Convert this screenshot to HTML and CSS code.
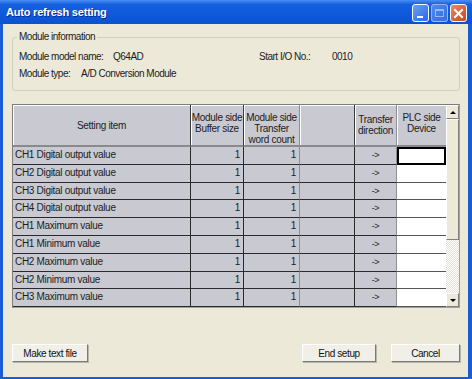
FILE: index.html
```html
<!DOCTYPE html>
<html lang="en">
  <head>
    <meta charset="UTF-8" />
    <title>Auto refresh setting</title>
    <link rel="stylesheet" href="styles.css">
  </head>
  <body>
    <div class="window">
      <div class="titlebar">
        <span class="title">Auto refresh setting</span>
        <div class="caption-btns">
          <span class="cap-btn min"><span class="min-bar"></span></span>
          <span class="cap-btn max"><span class="max-box"></span></span>
          <span class="cap-btn close">
            <svg width="11" height="11" viewBox="0 0 11 11">
              <path d="M2 2 L9 9 M9 2 L2 9" stroke="#fff" stroke-width="2" stroke-linecap="square" />
            </svg>
          </span>
        </div>
      </div>

      <div class="client">
        <fieldset class="group">
          <legend>Module information</legend>
          <div class="info-row">
            <span class="model-label">Module model name:</span>
            <span class="model-value">Q64AD</span>
            <span class="io-label">Start I/O No.:</span>
            <span>0010</span>
          </div>
          <div class="info-row">
            <span class="type-label">Module type:</span>
            <span>A/D Conversion Module</span>
          </div>
        </fieldset>

        <div class="grid-box">
          <div class="grid">
            <div class="hd hd-mid">Setting item</div>
            <div class="hd">Module side<br>Buffer size</div>
            <div class="hd soft">Module side<br>Transfer<br>word count</div>
            <div class="hd"></div>
            <div class="hd hd-mid soft">Transfer<br>direction</div>
            <div class="hd plc-hd">PLC side<br>Device</div>

            <div class="td item">CH1 Digital output value</div>
            <div class="td num">1</div>
            <div class="td num soft">1</div>
            <div class="td"></div>
            <div class="td dir soft">-&gt;</div>
            <div class="td plc focus"></div>

            <div class="td item">CH2 Digital output value</div>
            <div class="td num">1</div>
            <div class="td num soft">1</div>
            <div class="td"></div>
            <div class="td dir soft">-&gt;</div>
            <div class="td plc"></div>

            <div class="td item">CH3 Digital output value</div>
            <div class="td num">1</div>
            <div class="td num soft">1</div>
            <div class="td"></div>
            <div class="td dir soft">-&gt;</div>
            <div class="td plc"></div>

            <div class="td item">CH4 Digital output value</div>
            <div class="td num">1</div>
            <div class="td num soft">1</div>
            <div class="td"></div>
            <div class="td dir soft">-&gt;</div>
            <div class="td plc"></div>

            <div class="td item">CH1 Maximum value</div>
            <div class="td num">1</div>
            <div class="td num soft">1</div>
            <div class="td"></div>
            <div class="td dir soft">-&gt;</div>
            <div class="td plc"></div>

            <div class="td item">CH1 Minimum value</div>
            <div class="td num">1</div>
            <div class="td num soft">1</div>
            <div class="td"></div>
            <div class="td dir soft">-&gt;</div>
            <div class="td plc"></div>

            <div class="td item">CH2 Maximum value</div>
            <div class="td num">1</div>
            <div class="td num soft">1</div>
            <div class="td"></div>
            <div class="td dir soft">-&gt;</div>
            <div class="td plc"></div>

            <div class="td item">CH2 Minimum value</div>
            <div class="td num">1</div>
            <div class="td num soft">1</div>
            <div class="td"></div>
            <div class="td dir soft">-&gt;</div>
            <div class="td plc"></div>

            <div class="td item">CH3 Maximum value</div>
            <div class="td num">1</div>
            <div class="td num soft">1</div>
            <div class="td"></div>
            <div class="td dir soft">-&gt;</div>
            <div class="td plc"></div>
          </div>

          <div class="vscroll">
            <div class="sb-btn"><span class="arrow-up"></span></div>
            <div class="sb-thumb"></div>
            <div class="sb-track"></div>
            <div class="sb-btn"><span class="arrow-down"></span></div>
          </div>
        </div>

        <div class="actions">
          <button class="btn btn-text">Make text file</button>
          <span class="spacer"></span>
          <button class="btn btn-end">End setup</button>
          <button class="btn btn-cancel">Cancel</button>
        </div>
      </div>
    </div>
  </body>
</html>
```

FILE: styles.css
```css
* {
  margin: 0;
  padding: 0;
  box-sizing: border-box;
}

body {
  font-family: "Liberation Sans", Arial, sans-serif;
  background-color: #ffffff;
}

.window {
  width: 472px;
  height: 379px;
  background-color: #1a5bd6;
  padding: 0 4px 2px 3px;
  display: flex;
  flex-direction: column;
}

/* title bar */
.titlebar {
  height: 24px;
  margin: 0 -4px 0 -3px;
  padding: 0 5px 0 6px;
  display: flex;
  align-items: center;
  background: linear-gradient(#4a8ef3, #1660e0 18%, #0b56d8 80%, #0c51cc);
}

.title {
  flex: 1;
  color: #ffffff;
  font-weight: bold;
  font-size: 11px;
  letter-spacing: -0.2px;
  text-shadow: 1px 1px 0 #0a2c86;
}

.caption-btns {
  display: flex;
  gap: 2px;
  margin-top: 2px;
}

.cap-btn {
  width: 17px;
  height: 18px;
  border: 1px solid #ffffff;
  border-radius: 3px;
  display: flex;
  align-items: center;
  justify-content: center;
}

.min {
  background: linear-gradient(135deg, #6aa2f7, #2a66e2);
  align-items: flex-end;
  justify-content: flex-start;
  padding: 0 0 3px 4px;
}

.min-bar {
  width: 6px;
  height: 2px;
  background-color: #ffffff;
}

.max {
  background: linear-gradient(135deg, #4d88ee, #3370e0);
  border-color: rgba(255, 255, 255, 0.45);
}

.max-box {
  width: 9px;
  height: 8px;
  border: 1px solid rgba(255, 255, 255, 0.45);
  border-top-width: 2px;
}

.close {
  background: linear-gradient(135deg, #ec8a66, #c94420);
}

/* client area */
.client {
  flex: 1;
  background-color: #ece9d8;
  padding: 7px 8px 0 9px;
  display: flex;
  flex-direction: column;
  font-size: 10px;
  color: #1c1c1c;
}

.group {
  border: 1px solid #d0d0bf;
  border-radius: 3px;
  padding: 5px 6px 8px;
}

.group legend {
  line-height: 12px;
  padding: 0 2px;
  margin-left: -2px;
  letter-spacing: -0.5px;
}

.info-row {
  height: 17px;
  display: flex;
  align-items: center;
  letter-spacing: -0.5px;
}

.model-label {
  width: 94px;
}

.model-value {
  width: 146px;
}

.io-label {
  width: 73px;
}

.type-label {
  width: 62px;
}

/* setting grid */
.grid-box {
  margin-top: 13px;
  display: flex;
  border: 1px solid #7c7c7c;
  border-right-color: #a0a0a0;
  border-bottom-color: #a0a0a0;
}

.grid {
  display: grid;
  grid-template-columns: 178px 53px 56px 55px 42px 49px;
  grid-template-rows: 42px repeat(9, 17.8px);
  letter-spacing: -0.3px;
}

.hd {
  background-color: #c9c9d1;
  border-right: 1px solid #3a3a3a;
  border-bottom: 2px solid #8a8a8e;
  box-shadow: inset 1px 1px 0 #ffffff;
  text-align: center;
  line-height: 11px;
  padding-top: 7px;
}

.hd-mid {
  display: flex;
  align-items: center;
  justify-content: center;
  padding-top: 0;
}

.plc-hd {
  border-right: none;
}

.td {
  background-color: #c9c9d1;
  border-right: 1px solid #2a2a2a;
  border-bottom: 1px solid #2a2a2a;
  line-height: 16px;
}

.soft {
  border-right-color: #8e8e94;
}

.item {
  padding-left: 2px;
}

.num {
  text-align: right;
  padding-right: 3px;
}

.dir {
  text-align: center;
  font-size: 9px;
}

.plc {
  background-color: #ffffff;
  border-right: none;
  border-bottom-color: #555555;
}

.focus {
  border: 1px solid #000000;
  box-shadow: inset 0 0 0 1px #000000;
}

/* scrollbar */
.vscroll {
  width: 13px;
  display: flex;
  flex-direction: column;
  background: repeating-conic-gradient(#ffffff 0 25%, #e4e2d6 0 50%) 0 0 / 2px 2px;
}

.sb-btn {
  height: 14px;
  background-color: #ece9d8;
  border: 1px solid;
  border-color: #ffffff #808080 #808080 #ffffff;
  display: flex;
  align-items: center;
  justify-content: center;
}

.arrow-up {
  border-left: 3px solid transparent;
  border-right: 3px solid transparent;
  border-bottom: 3px solid #000000;
}

.arrow-down {
  border-left: 3px solid transparent;
  border-right: 3px solid transparent;
  border-top: 3px solid #000000;
}

.sb-thumb {
  height: 121px;
  background-color: #ece9d8;
  border: 1px solid;
  border-color: #ffffff #808080 #808080 #ffffff;
}

.sb-track {
  flex: 1;
}

/* buttons */
.actions {
  margin-top: 36px;
  display: flex;
  gap: 15px;
}

.spacer {
  flex: 1;
}

.btn {
  height: 18px;
  font-family: "Liberation Sans", Arial, sans-serif;
  font-size: 10px;
  letter-spacing: -0.4px;
  color: #111111;
  background-color: #f1f0e8;
  border: 1px solid;
  border-color: #ffffff #7a7a7a #7a7a7a #ffffff;
  box-shadow: 1px 1px 0 #b8b6aa;
}

.btn-text {
  width: 76px;
}

.btn-end {
  width: 74px;
}

.btn-cancel {
  width: 69px;
}
```
